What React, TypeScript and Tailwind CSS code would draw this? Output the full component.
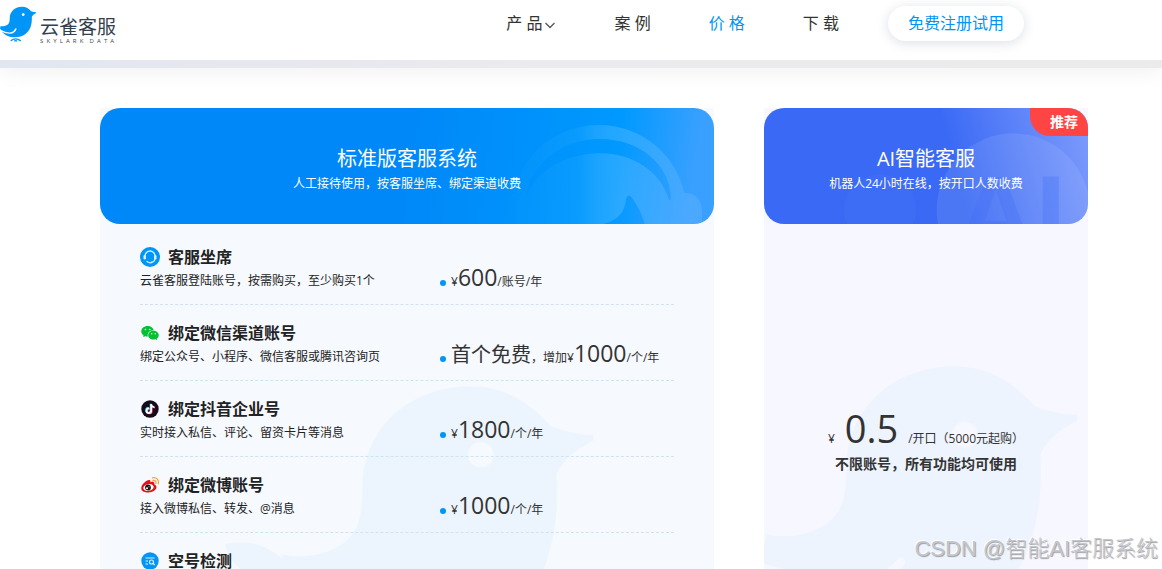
import React from 'react'
import { AiFillWechat } from 'react-icons/ai'
import { FaTiktok } from 'react-icons/fa'

const BIRD =
  'M68 18 C80 18 89 24 96 32 Q104 35 111 35 L111 37 Q101 42 98 49 C100 80 88 112 45 112 C25 112 8 103 0 84 L2 77 Q12 79 20 75 C28 71 30 66 30 52 C31 32 47 18 68 18 Z M76 42 A4.500 4.500 0 1 0 67 42 A4.500 4.500 0 1 0 76 42 Z'

/**
 * ロゴ
 */
const Logo: React.FC = () => (
  <a href="#" className="flex items-start gap-1 text-[#333f4c]">
    <svg viewBox="0 16 111 110" className="h-9 w-9" aria-hidden="true">
      <path d={BIRD} fill="#0095f6" fillRule="evenodd" />
      <path d="M0 90 Q38 110 49 86" fill="none" stroke="#fff" strokeWidth="4" strokeLinecap="round" />
      <path d="M33 123 Q48 111 64 123 M44 124 Q48 121 53 124" fill="none" stroke="#0095f6" strokeWidth="4" />
    </svg>
    <span className="block pt-[11px]">
      <span className="block text-[19px] leading-5">云雀客服</span>
      <span className="block text-[6px] leading-2 whitespace-pre">{'S  K  Y  L  A  R  K    D  A  T  A'}</span>
    </span>
  </a>
)

const HeadsetIcon: React.FC = () => (
  <svg viewBox="0 0 20 20" className="h-5 w-5" aria-hidden="true">
    <circle cx="10" cy="10" r="10" fill="#0095f6" />
    <path d="M5 11 V9 a5 5 0 0 1 10 0 V11 q0 4 -4 4.500" fill="none" stroke="#d8efff" strokeWidth="1.300" />
    <rect x="3.500" y="8" width="2.500" height="4.500" rx="1.200" fill="#d8efff" />
    <rect x="14" y="8" width="2.500" height="4.500" rx="1.200" fill="#d8efff" />
    <path d="M7 14.500 q3 2.200 5 .8" fill="none" stroke="#d8efff" strokeWidth="1.300" strokeLinecap="round" />
  </svg>
)

const WechatIcon: React.FC = () => <AiFillWechat className="h-5 w-5 text-[#07c02f]" aria-hidden="true" />

const DouyinIcon: React.FC = () => (
  <svg viewBox="0 0 20 20" className="h-5 w-5" aria-hidden="true">
    <circle cx="10" cy="10" r="8.700" fill="#160b1b" />
    <FaTiktok x="4.500" y="4.500" size={10} color="#25f4ee" />
    <FaTiktok x="5.700" y="5.500" size={10} color="#fe2c55" />
    <FaTiktok x="5.100" y="5" size={10} color="#fff" />
  </svg>
)

const WeiboIcon: React.FC = () => (
  <svg viewBox="0 0 20 20" className="h-5 w-5" aria-hidden="true">
    <path
      d="M8 5.300 C9.500 4.700 10.800 5.200 10.300 7.200 C13 6.200 14.800 6.800 14.200 9.300 C16.600 10.200 17.200 12.400 15.500 14.600 C12.500 18.300 5 18.500 2 15.400 C-.5 12 4 6.700 8 5.300 Z"
      fill="#e6101c"
    />
    <ellipse cx="8.500" cy="12.500" rx="5.200" ry="3.400" fill="#fff" transform="rotate(-8 8.500 12.500)" />
    <circle cx="8" cy="12.500" r="2.900" fill="#1a1414" />
    <circle cx="7" cy="13.200" r="1" fill="#fff" />
    <circle cx="9" cy="11.800" r=".5" fill="#fff" />
    <path d="M12.500 2.900 C16.500 2 19.500 5 18.300 8.800 M13 5.500 C15.200 5 16.500 6.500 15.900 8.300" fill="none" stroke="#f9a13c" strokeWidth="1.300" strokeLinecap="round" />
  </svg>
)

const CheckNumberIcon: React.FC = () => (
  <svg viewBox="0 0 20 20" className="h-5 w-5" aria-hidden="true">
    <circle cx="10" cy="10" r="8.700" fill="#0095f6" />
    <path d="M5.500 7 H14.500 M5.500 10 H8 M5.500 13 H8" stroke="#d8efff" strokeWidth="1.200" />
    <circle cx="11.500" cy="11" r="2" fill="none" stroke="#d8efff" strokeWidth="1.200" />
    <path d="M13 12.400 L14.800 14" stroke="#d8efff" strokeWidth="1.200" />
  </svg>
)

type Part = { text: string; big?: 'number' | 'word' }
type Item = { title: string; desc?: string; icon: React.FC; price?: Part[] }

// 料金項目のリスト
const items: Item[] = [
  {
    title: '客服坐席',
    desc: '云雀客服登陆账号，按需购买，至少购买1个',
    icon: HeadsetIcon,
    price: [{ text: '¥' }, { text: '600', big: 'number' }, { text: '/账号/年' }],
  },
  {
    title: '绑定微信渠道账号',
    desc: '绑定公众号、小程序、微信客服或腾讯咨询页',
    icon: WechatIcon,
    price: [{ text: '首个免费', big: 'word' }, { text: '，增加¥' }, { text: '1000', big: 'number' }, { text: '/个/年' }],
  },
  {
    title: '绑定抖音企业号',
    desc: '实时接入私信、评论、留资卡片等消息',
    icon: DouyinIcon,
    price: [{ text: '¥' }, { text: '1800', big: 'number' }, { text: '/个/年' }],
  },
  {
    title: '绑定微博账号',
    desc: '接入微博私信、转发、@消息',
    icon: WeiboIcon,
    price: [{ text: '¥' }, { text: '1000', big: 'number' }, { text: '/个/年' }],
  },
  { title: '空号检测', icon: CheckNumberIcon },
]

const partClass = {
  number: 'text-[23px]',
  word: 'text-xl',
}

/**
 * ヘッダー
 */
const Header: React.FC = () => (
  <header className="relative shadow-[0_4px_20px_rgba(0,0,0,0.06)]">
    <div className="flex h-15 items-start bg-white pr-[138px]">
      <div className="pt-[6px]">
        <Logo />
      </div>
      <nav className="ml-auto flex items-start pt-[6px] text-base leading-[34px] text-[#333]">
        <a href="#" className="mr-[58px] flex items-center gap-[2px]">
          产 品
          <svg viewBox="0 0 12 12" className="mt-1 h-3 w-3" aria-hidden="true">
            <path d="M1.500 4 L6 8.500 L10.500 4" fill="none" stroke="#555" strokeWidth="1.300" />
          </svg>
        </a>
        <a href="#" className="mr-[58px]">案 例</a>
        <a href="#" className="mr-[58px] text-[#0095f6]">价 格</a>
        <a href="#" className="mr-[49px]">下 载</a>
        <a href="#" className="rounded-full bg-white px-5 leading-[35px] text-[#0095f6] shadow-[0_2px_12px_rgba(60,80,120,0.18)]">
          免费注册试用
        </a>
      </nav>
    </div>
    <div className="h-2 bg-linear-to-r from-[#e1e6f0] via-[#ebeaee] via-45% to-[#ebebeb]" />
  </header>
)

/**
 * 標準版の料金カード
 */
const StandardCard: React.FC = () => (
  <section className="relative overflow-hidden bg-[#f6f9fe]">
    <svg viewBox="0 0 614 461" className="absolute top-0 left-0 w-[614px]" aria-hidden="true">
      <g fill="#ecf5fe">
        <path d={BIRD} fillRule="evenodd" transform="translate(177 227) scale(2.850)" />
        <path d="M125 436 Q155 430 176 446 Q186 455 205 461 H140 Q128 450 125 436 Z" />
      </g>
    </svg>
    <div className="relative overflow-hidden rounded-[20px] bg-[linear-gradient(98deg,#0088f8_50%,#0099ff_83%,#3aa0ff_96%)] px-5 pt-[38px] pb-7 text-center text-white">
      <svg viewBox="0 0 702 342" className="absolute right-0 bottom-0 w-[234px]" aria-hidden="true">
        <defs>
          <linearGradient id="headset">
            <stop offset="0" stopColor="#20a8ff" stopOpacity="0" />
            <stop offset=".4" stopColor="#20a8ff" stopOpacity=".3" />
            <stop offset=".65" stopColor="#fff" stopOpacity=".14" />
            <stop offset="1" stopColor="#fff" stopOpacity=".08" />
          </linearGradient>
        </defs>
        <path
          fill="url(#headset)"
          fillRule="evenodd"
          d="M50 342 V295 Q60 262 104 250 C125 130 230 45 357 45 C490 45 590 140 613 248 Q662 250 666 300 V342 Z M135 270 C145 170 240 87 360 87 C480 87 572 165 573 266 Q570 275 566 266 C540 185 460 130 360 130 C250 130 160 190 135 270 Z M370 342 Q435 325 438 266 Q444 250 455 262 Q485 305 494 342 Z"
        />
      </svg>
      <h2 className="relative text-xl leading-[26px]">标准版客服系统</h2>
      <p className="relative text-xs leading-6">人工接待使用，按客服坐席、绑定渠道收费</p>
    </div>
    <ul className="relative px-10 pt-[5px]">
      {items.map(({ title, desc, icon: Icon, price }) => (
        <li key={title} className="flex items-end border-b border-dashed border-[#cfe3f2] pt-4 pb-[11px]">
          <div className="w-[300px]">
            <h3 className="flex items-center gap-2 text-base leading-6 font-bold text-[#222]">
              <Icon />
              {title}
            </h3>
            <p className="h-6 text-xs leading-6 text-[#222]">{desc}</p>
          </div>
          {price && (
            <p className="flex h-8 items-baseline text-xs leading-8 whitespace-nowrap text-[#333]">
              <span className="mr-[5px] h-[6px] w-[6px] rounded-full bg-[#0095f6]" />
              {price.map((v) => (
                <span key={v.text} className={v.big && partClass[v.big]}>
                  {v.text}
                </span>
              ))}
            </p>
          )}
        </li>
      ))}
    </ul>
  </section>
)

/**
 * AI版の料金カード
 */
const AiCard: React.FC = () => (
  <section className="relative overflow-hidden bg-[#f7f7ff]">
    <svg viewBox="0 0 324 461" className="absolute top-0 left-0 w-[324px]" aria-hidden="true">
      <path d={BIRD} fill="#edf4fe" fillRule="evenodd" transform="translate(-3 207) scale(2.850)" />
      <path d="M2 461 Q110 490 137 454" fill="none" stroke="#f7f7ff" strokeWidth="9" strokeLinecap="round" />
    </svg>
    <div className="relative overflow-hidden rounded-[20px] bg-[linear-gradient(75deg,#3a6af5_58%,#7f9cfc)] px-5 pt-[38px] pb-7 text-center text-white">
      <svg viewBox="42 24 972 348" className="absolute top-0 left-0 w-full" aria-hidden="true">
        <circle cx="790" cy="330" r="230" fill="#fff" fillOpacity=".09" />
        <circle cx="390" cy="330" r="108" fill="#fff" fillOpacity=".02" />
        <text x="618" y="456" fontFamily="Liberation Sans, sans-serif" fontSize="330" fontWeight="700" fill="#3f6cf6" fillOpacity=".3">
          AI
        </text>
      </svg>
      <span className="absolute top-0 right-0 rounded-bl-[20px] bg-[#ff4444] pr-[10px] pl-5 text-sm leading-7 font-bold">推荐</span>
      <h2 className="relative text-xl leading-[26px]">AI智能客服</h2>
      <p className="relative text-xs leading-6">机器人24小时在线，按开口人数收费</p>
    </div>
    <div className="relative pt-45 text-center text-[#333]">
      <p className="flex items-baseline justify-center gap-[10px] text-xs leading-5">
        <span>¥</span>
        <span className="text-[38px] leading-12">0.5</span>
        <span>/开口（5000元起购）</span>
      </p>
      <p className="text-sm leading-6 font-bold">不限账号，所有功能均可使用</p>
    </div>
  </section>
)

const App: React.FC = () => (
  <div className="relative flex h-screen flex-col overflow-hidden bg-white font-['Open_Sans','Noto_Sans_CJK_SC',sans-serif]">
    <Header />
    <main className="grid min-h-0 flex-1 grid-cols-[minmax(0,1fr)_324px] gap-[50px] pt-10 pr-[74px] pl-[100px]">
      <StandardCard />
      <AiCard />
    </main>
    <p className="absolute right-1 bottom-1 font-['Liberation_Sans','Noto_Sans_CJK_SC',sans-serif] text-[22px] leading-8 font-light text-[#c4c6cc] [text-shadow:1px_1px_1px_#9b9da4,-1px_-1px_0_#fff]">
      CSDN @智能AI客服系统
    </p>
  </div>
)

export default App
